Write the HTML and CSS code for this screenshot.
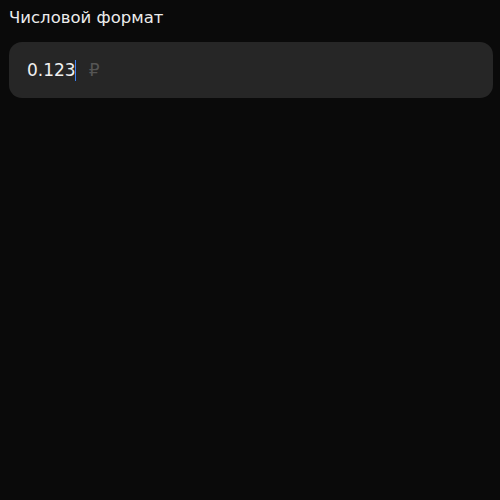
FILE: index.html
```html
<!DOCTYPE html>
<html lang="ru">
<head>
<meta charset="utf-8">
<link rel="stylesheet" href="styles.css">
</head>
<body>
<div class="wrap">
  <label class="label">Числовой формат</label>
  <div class="field">
    <span class="value">0.123</span><span class="caret"></span><span class="suffix">₽</span>
  </div>
</div>
</body>
</html>
```
FILE: styles.css
```css
html, body {
  margin: 0;
  background: #0a0a0a;
  height: 100%;
}
body {
  font-family: "DejaVu Sans", sans-serif;
  color: #f2f2f2;
}
.wrap {
  padding: 6px 7px 0 9px;
  display: flex;
  flex-direction: column;
  gap: 12px;
}
.label {
  font-size: 16.5px;
  line-height: 24px;
  color: #ececec;
}
.field {
  height: 56px;
  background: #262626;
  border-radius: 13px;
  display: flex;
  align-items: center;
  padding: 0 18px;
  font-size: 17px;
}
.value {
  color: #f0f0f0;
}
.caret {
  width: 1px;
  height: 21px;
  background: #3b82f6;
  margin-left: -1px;
}
.suffix {
  color: #555;
  margin-left: 13px;
}
```
